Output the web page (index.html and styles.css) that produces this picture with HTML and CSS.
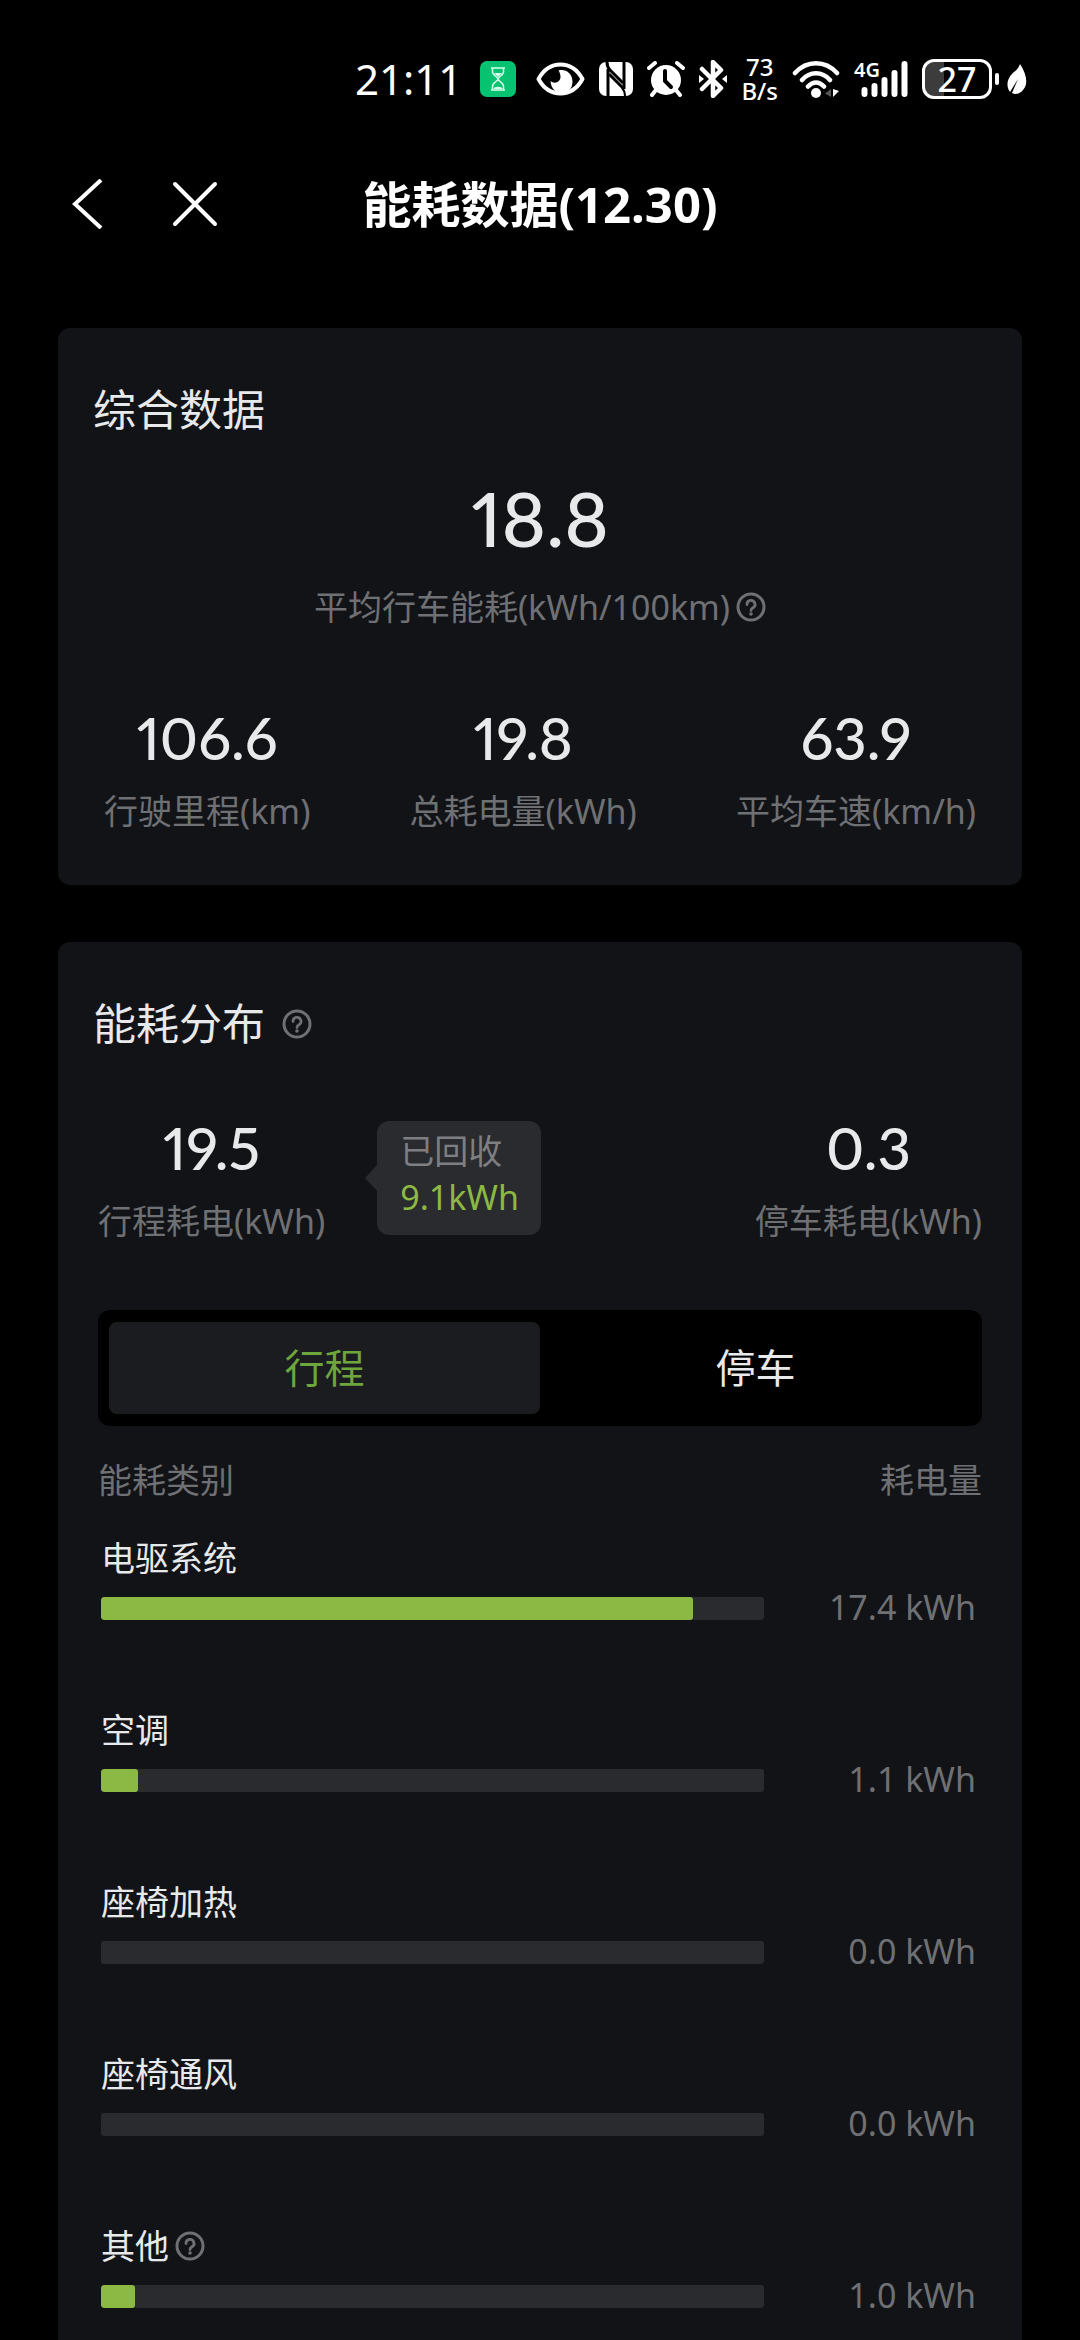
FILE: index.html
```html
<!DOCTYPE html>
<html lang="zh-CN">
<head>
<meta charset="utf-8">
<meta name="viewport" content="width=device-width, initial-scale=1">
<title>能耗数据</title>
<link rel="stylesheet" href="styles.css">
</head>
<body>
<svg class="defs" aria-hidden="true">
  <symbol id="help" viewBox="0 0 30 30">
    <circle cx="15" cy="15" r="13" fill="none" stroke="currentColor" stroke-width="3"/>
    <path d="M11 12.500a4 4 0 1 1 6 3.300c-1.400.8-2 1.400-2 2.700" fill="none" stroke="currentColor" stroke-width="2.800" stroke-linecap="round"/>
    <circle cx="15" cy="22" r="1.800" fill="currentColor"/>
  </symbol>
</svg>
<div class="status">
  <span class="time">21:11</span>
  <svg class="badge" width="36" height="36" viewBox="0 0 36 36"><rect width="36" height="36" rx="7" fill="#07c271"/><path d="M11 7h14M11 29h14M12.500 7v4c0 3 5.500 5 5.500 7s-5.500 4-5.500 7v4M23.500 7v4c0 3-5.500 5-5.500 7s5.500 4 5.500 7v4" fill="none" stroke="#d8ffec" stroke-width="1.500"/><path d="M14 12h8l-4 4zM13.500 28c0-3 9-3 9 0z" fill="#d8ffec"/></svg>
  <svg width="49" height="36" viewBox="0 0 49 36"><path d="M2.500 18C8 8 16 3.500 24.500 3.500S41 8 46.500 18C41 28 33 32.500 24.500 32.500S8 28 2.500 18z" fill="none" stroke="#fff" stroke-width="4" stroke-linejoin="round"/><path d="M22.500 9.500c7-2 14 3 14 11S31 32 25.500 32 15 28 14.500 20c4 3.500 10 1 10-4 0-3-1-5-2-6.500z" fill="#fff"/></svg>
  <svg width="34" height="36" viewBox="0 0 34 36"><rect x="0" y="1" width="34" height="34" rx="7" fill="#fff"/><path d="M9 8v27M25 1v27" stroke="#000" stroke-width="3"/><path d="M8 1c0 4 1 6 3 8l13 13M10 13l15 15" fill="none" stroke="#000" stroke-width="3"/><path d="M26 35c0-4-1-6-3-8" fill="none" stroke="#000" stroke-width="2"/></svg>
  <svg width="38" height="36" viewBox="0 0 38 36"><circle cx="19" cy="19" r="15" fill="#fff"/><path d="M2 7l6-5M36 7l-6-5M9 29l-4 5M29 29l4 5" stroke="#fff" stroke-width="4" stroke-linecap="round"/><path d="M18 10v10l6 6" fill="none" stroke="#000" stroke-width="4" stroke-linecap="round"/></svg>
  <svg width="28" height="38" viewBox="0 0 28 38"><path d="M3 9l19 19-8 8V2l8 8L3 29" fill="none" stroke="#fff" stroke-width="4.500" stroke-linecap="round" stroke-linejoin="round"/><path d="M0 15l5 4-5 4zM28 15l-5 4 5 4z" fill="#fff"/></svg>
  <span class="rate"><span>73</span><span>B/s</span></span>
  <svg width="48" height="38" viewBox="0 0 48 38"><path d="M3 13C15 0 33 0 45 13M10 20C18 11 30 11 38 20M16 26.500C21 21 27 21 32 26.500" fill="none" stroke="#fff" stroke-width="4.500" stroke-linecap="round"/><circle cx="24" cy="33" r="5" fill="#fff"/><path d="M39 29v8l-6-3.500z" fill="#555"/><path d="M41 29v8l6-6z" fill="#fff"/></svg>
  <svg width="54" height="54" viewBox="0 -8 54 54"><text class="network" x="0" y="17">4G</text><path d="M10.500 30v4M20.500 26v8M30.500 20v14M40.500 13v21M50.500 4v30" stroke="#fff" stroke-width="6" stroke-linecap="round"/></svg>
  <span class="power"><span class="battery">27</span><span class="nub"></span>
  <svg width="22" height="34" viewBox="0 0 22 34"><path d="M14 2c6 9 9 20 3 26-3 4-8 5-11 3L12 17 4 30C-1 23 2 15 8 10c3-2 5-5 6-8z" fill="#fff"/></svg></span>
</div>
<header class="bar">
  <nav class="actions">
    <button class="icon" type="button" aria-label="返回"><svg width="34" height="50" viewBox="0 0 34 50"><path d="M31 1L5 25l26 24" fill="none" stroke="#fff" stroke-width="4"/></svg></button>
    <button class="icon" type="button" aria-label="关闭"><svg width="46" height="46" viewBox="0 0 46 46"><path d="M3 3l40 40M43 3L3 43" stroke="#fff" stroke-width="4" stroke-linecap="round"/></svg></button>
  </nav>
  <h1>能耗数据(12.30)</h1>
</header>
<main>
  <section class="card">
    <h2>综合数据</h2>
    <div class="total">
      <span class="figure large">18.8</span>
      <span class="caption">平均行车能耗(kWh/100km)<button class="icon help" type="button" aria-label="说明"><svg width="30" height="30"><use href="#help"/></svg></button></span>
    </div>
    <div class="stats">
      <div class="stat"><span class="figure">106.6</span><span class="caption">行驶里程(km)</span></div>
      <div class="stat"><span class="figure">19.8</span><span class="caption">总耗电量(kWh)</span></div>
      <div class="stat"><span class="figure">63.9</span><span class="caption">平均车速(km/h)</span></div>
    </div>
  </section>
  <section class="card spread">
    <h2>能耗分布<button class="icon help" type="button" aria-label="说明"><svg width="30" height="30"><use href="#help"/></svg></button></h2>
    <div class="split">
      <div class="stat"><span class="figure">19.5</span><span class="caption">行程耗电(kWh)</span></div>
      <div class="bubble"><span>已回收</span><span class="green">9.1kWh</span></div>
      <div class="stat last"><span class="figure">0.3</span><span class="caption">停车耗电(kWh)</span></div>
    </div>
    <div class="tabs" role="tablist">
      <button class="tab active" type="button" role="tab" aria-selected="true">行程</button>
      <button class="tab" type="button" role="tab" aria-selected="false">停车</button>
    </div>
    <table>
      <thead><tr><th scope="col" class="kind">能耗类别</th><th scope="col">耗电量</th></tr></thead>
      <tbody>
        <tr><th scope="row"><span class="name">电驱系统</span><div class="track"><div class="fill" style="width:89.3%"></div></div></th><td>17.4 kWh</td></tr>
        <tr><th scope="row"><span class="name">空调</span><div class="track"><div class="fill" style="width:5.6%"></div></div></th><td>1.1 kWh</td></tr>
        <tr><th scope="row"><span class="name">座椅加热</span><div class="track"></div></th><td>0.0 kWh</td></tr>
        <tr><th scope="row"><span class="name">座椅通风</span><div class="track"></div></th><td>0.0 kWh</td></tr>
        <tr><th scope="row"><span class="name">其他<button class="icon help" type="button" aria-label="说明"><svg width="30" height="30"><use href="#help"/></svg></button></span><div class="track"><div class="fill" style="width:5.1%"></div></div></th><td>1.0 kWh</td></tr>
      </tbody>
    </table>
  </section>
</main>
</body>
</html>
```

FILE: styles.css
```css
* { box-sizing: border-box; }
body {
  margin: 0;
  min-height: 100vh;
  background: #000;
  color: #e8e9ea;
  font-family: "Noto Sans", "Noto Sans CJK SC", sans-serif;
  font-size: 34px;
  line-height: 50px;
}
svg { display: block; flex: none; }
.defs { position: absolute; width: 0; height: 0; }
button { border: 0; padding: 0; background: none; color: inherit; font: inherit; }
.icon { display: flex; align-items: center; justify-content: center; }
.help { color: #6f7073; }
h1, h2 { margin: 0; }

.status {
  display: flex;
  align-items: center;
  justify-content: flex-end;
  gap: 14px;
  height: 120px;
  padding: 38px 52px 0 0;
  color: #fff;
}
.time { font-size: 42px; margin-right: 4px; }
.badge { margin-right: 6px; }
.rate {
  display: flex;
  flex-direction: column;
  align-items: center;
  font-size: 24px;
  font-weight: 500;
  line-height: 24px;
}
.network { font-size: 20px; font-weight: 600; fill: #fff; }
.power { display: flex; align-items: center; gap: 3px; }
.battery {
  width: 70px;
  height: 40px;
  border: 3px solid #fff;
  border-radius: 12px;
  background: linear-gradient(90deg, #3c3c3c 30%, #000 30%);
  font-size: 34px;
  font-weight: 500;
  line-height: 34px;
  text-align: center;
}
.nub { width: 4px; height: 12px; border-radius: 2px; background: #fff; margin-right: 4px; }

.bar {
  display: grid;
  grid-template-columns: 1fr auto 1fr;
  align-items: center;
  height: 168px;
  padding: 0 70px;
  color: #fff;
}
.actions { display: flex; align-items: center; gap: 68px; }
h1 { font-size: 49px; line-height: 64px; font-weight: 700; }

main {
  display: flex;
  flex-direction: column;
  gap: 57px;
  padding: 40px 58px 0;
}
.card { padding: 52px 40px 49px; border-radius: 12px; background: #121317; }
.spread { padding-bottom: 32px; border-radius: 12px 12px 0 0; }
h2 {
  display: flex;
  align-items: center;
  gap: 17px;
  margin-left: -5px;
  font-size: 43px;
  font-weight: 400;
  line-height: 60px;
}
.figure { font-family: "Liberation Sans Narrow", Lato, sans-serif; font-size: 58px; font-weight: 500; line-height: 64px; font-feature-settings: "pnum"; }
.large { font-size: 76px; line-height: 90px; }
.caption { display: flex; align-items: center; gap: 6px; color: #6f7073; }
.total, .stat { display: flex; flex-direction: column; align-items: center; }
.total { gap: 19px; padding-top: 33px; }
.stat { gap: 16px; }
.stats { display: flex; justify-content: space-between; padding: 74px 6px 0; }

.split { display: flex; align-items: center; padding-top: 62px; }
.last { margin-left: auto; }
.bubble {
  position: relative;
  display: flex;
  flex-direction: column;
  margin-left: 52px;
  margin-bottom: 6px;
  padding: 7px 22px 15px 23px;
  border-radius: 12px;
  background: #2a2b2e;
  color: #7e7f82;
  line-height: 46px;
}
.bubble::before {
  content: "";
  position: absolute;
  top: 44px;
  left: -12px;
  border: solid transparent;
  border-width: 13px 12px 13px 0;
  border-right-color: #2a2b2e;
}
.green { color: #8bb943; }

.tabs {
  display: grid;
  grid-template-columns: 1fr 1fr;
  margin-top: 64px;
  padding: 12px 11px;
  border-radius: 12px;
  background: #000;
}
.tab { height: 92px; border-radius: 8px; font-size: 40px; }
.active { background: #1b1c1f; color: #6fa53d; }

table { width: 100%; margin-top: 29px; border-collapse: collapse; table-layout: fixed; }
th { padding: 0; font-weight: 400; text-align: left; vertical-align: top; }
thead th { height: 78px; color: #6f7073; text-align: right; }
thead .kind { width: 75.3%; text-align: left; }
tbody th { padding: 0 0 85px 3px; }
tbody tr:last-child th { padding-bottom: 0; }
td { padding: 62px 6px 0 0; color: #6f7073; line-height: 24px; text-align: right; vertical-align: top; }
.name { display: flex; align-items: center; gap: 6px; }
.track { height: 23px; margin-top: 14px; border-radius: 3px; background: #2a2b2e; overflow: hidden; }
.fill { height: 100%; border-radius: 3px; background: #8bb943; }
```
